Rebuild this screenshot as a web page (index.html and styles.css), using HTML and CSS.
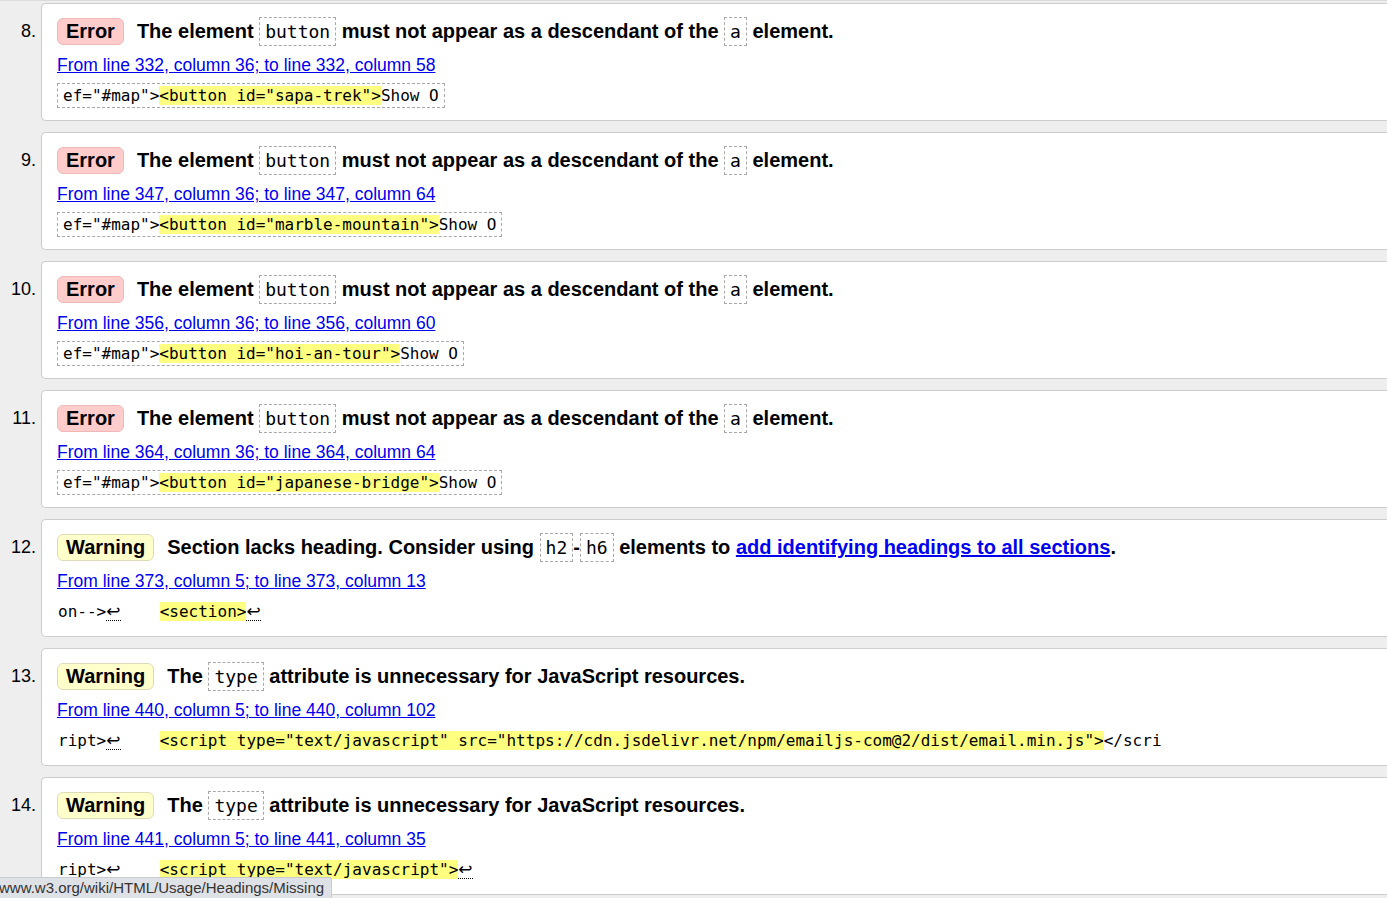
FILE: index.html
```html
<!DOCTYPE html>
<html lang="en">
<head>
<meta charset="utf-8">
<title>Validator messages</title>
<link rel="stylesheet" href="styles.css">
</head>
<body>
<ol class="messages">
  <li class="msg">
    <span class="num">8.</span>
    <div class="card">
      <p class="msg-line"><strong class="badge badge-error">Error</strong><span class="text">The element <code class="ic">button</code> must not appear as a descendant of the <code class="ic">a</code> element.</span></p>
      <p class="loc"><a href="#">From line 332, column 36; to line 332, column 58</a></p>
      <p class="extract-row"><code class="extract boxed">ef="#map"&gt;<mark>&lt;button id="sapa-trek"&gt;</mark>Show O</code></p>
    </div>
  </li>
  <li class="msg">
    <span class="num">9.</span>
    <div class="card">
      <p class="msg-line"><strong class="badge badge-error">Error</strong><span class="text">The element <code class="ic">button</code> must not appear as a descendant of the <code class="ic">a</code> element.</span></p>
      <p class="loc"><a href="#">From line 347, column 36; to line 347, column 64</a></p>
      <p class="extract-row"><code class="extract boxed">ef="#map"&gt;<mark>&lt;button id="marble-mountain"&gt;</mark>Show O</code></p>
    </div>
  </li>
  <li class="msg">
    <span class="num">10.</span>
    <div class="card">
      <p class="msg-line"><strong class="badge badge-error">Error</strong><span class="text">The element <code class="ic">button</code> must not appear as a descendant of the <code class="ic">a</code> element.</span></p>
      <p class="loc"><a href="#">From line 356, column 36; to line 356, column 60</a></p>
      <p class="extract-row"><code class="extract boxed">ef="#map"&gt;<mark>&lt;button id="hoi-an-tour"&gt;</mark>Show O</code></p>
    </div>
  </li>
  <li class="msg">
    <span class="num">11.</span>
    <div class="card">
      <p class="msg-line"><strong class="badge badge-error">Error</strong><span class="text">The element <code class="ic">button</code> must not appear as a descendant of the <code class="ic">a</code> element.</span></p>
      <p class="loc"><a href="#">From line 364, column 36; to line 364, column 64</a></p>
      <p class="extract-row"><code class="extract boxed">ef="#map"&gt;<mark>&lt;button id="japanese-bridge"&gt;</mark>Show O</code></p>
    </div>
  </li>
  <li class="msg">
    <span class="num">12.</span>
    <div class="card">
      <p class="msg-line"><strong class="badge badge-warning">Warning</strong><span class="text">Section lacks heading. Consider using <code class="ic">h2</code>-<code class="ic">h6</code> elements to <a class="strong-link" href="#">add identifying headings to all sections</a>.</span></p>
      <p class="loc"><a href="#">From line 373, column 5; to line 373, column 13</a></p>
      <p class="extract-row"><code class="extract">on--&gt;<b class="lf">↩</b>    <mark>&lt;section&gt;</mark><b class="lf">↩</b></code></p>
    </div>
  </li>
  <li class="msg">
    <span class="num">13.</span>
    <div class="card">
      <p class="msg-line"><strong class="badge badge-warning">Warning</strong><span class="text">The <code class="ic">type</code> attribute is unnecessary for JavaScript resources.</span></p>
      <p class="loc"><a href="#">From line 440, column 5; to line 440, column 102</a></p>
      <p class="extract-row"><code class="extract">ript&gt;<b class="lf">↩</b>    <mark>&lt;script type="text/javascript" src="https://cdn.jsdelivr.net/npm/emailjs-com@2/dist/email.min.js"&gt;</mark>&lt;/scri</code></p>
    </div>
  </li>
  <li class="msg">
    <span class="num">14.</span>
    <div class="card">
      <p class="msg-line"><strong class="badge badge-warning">Warning</strong><span class="text">The <code class="ic">type</code> attribute is unnecessary for JavaScript resources.</span></p>
      <p class="loc"><a href="#">From line 441, column 5; to line 441, column 35</a></p>
      <p class="extract-row"><code class="extract">ript&gt;<b class="lf">↩</b>    <mark>&lt;script type="text/javascript"&gt;</mark><b class="lf">↩</b></code></p>
    </div>
  </li>
</ol>
<div class="status-bar">www.w3.org/wiki/HTML/Usage/Headings/Missing</div>
</body>
</html>
```

FILE: styles.css
```css
html, body {
  margin: 0;
  padding: 0;
  background: #eeeeee;
  overflow: hidden;
}

body {
  border-top: 1px solid #dcdcdc;
  font-family: "Liberation Sans", Arial, sans-serif;
  color: #000;
}

.messages {
  list-style: none;
  margin: 0;
  padding: 2px 0 0 0;
  display: flex;
  flex-direction: column;
  gap: 11px;
}

.msg {
  display: grid;
  grid-template-columns: 41px 1fr;
}

.num {
  font-size: 18px;
  line-height: 32px;
  padding: 12px 5px 0 0;
  text-align: right;
}

.card {
  background: #fff;
  border: 1px solid #cccccc;
  border-right: none;
  border-radius: 5px 0 0 5px;
  height: 118px;
  padding: 11px 0 0 15px;
  box-sizing: border-box;
  display: flex;
  flex-direction: column;
}

.card p {
  margin: 0;
}

.msg-line {
  height: 32px;
  flex: none;
  display: flex;
  align-items: center;
  white-space: nowrap;
}

.badge {
  display: inline-block;
  font-size: 20px;
  font-weight: bold;
  line-height: 25px;
  padding: 0 8px;
  border-radius: 6px;
  border: 1px solid;
  margin-right: 13px;
}

.badge-error {
  background: #ffcccc;
  border-color: #efb8b8;
}

.badge-warning {
  background: #ffffcc;
  border-color: #dedbb8;
}

.text {
  font-size: 20px;
  font-weight: bold;
  line-height: 32px;
}

.ic {
  display: inline-block;
  font-family: "DejaVu Sans Mono", "Liberation Mono", monospace;
  font-weight: normal;
  font-size: 18px;
  line-height: 27px;
  padding: 0 5px;
  border: 1px dashed #a8a8a8;
  vertical-align: middle;
  position: relative;
  top: -1px;
}

.strong-link {
  color: #0000ee;
  text-decoration: underline;
}

.loc {
  margin-top: 7px !important;
  height: 22px;
  flex: none;
  line-height: 22px;
  font-size: 17.5px;
}

.loc a {
  color: #0000ee;
  text-decoration: underline;
}

.extract-row {
  margin-top: 7px !important;
  height: 25px;
  flex: none;
  display: flex;
  align-items: center;
}

.extract {
  display: inline-block;
  font-family: "DejaVu Sans Mono", "Liberation Mono", monospace;
  font-size: 16px;
  line-height: 23px;
  white-space: pre;
  border: 1px solid transparent;
  padding: 0;
}

.extract.boxed {
  border: 1px dashed #a8a8a8;
  padding: 0 5px;
}

mark {
  background: #ffff80;
  color: #000;
}

.lf {
  display: inline-block;
  width: 15px;
  font-family: "DejaVu Sans", sans-serif;
  font-size: 17px;
  font-weight: normal;
  line-height: 18px;
  border-bottom: 1px dotted #000;
  text-align: left;
}

.status-bar {
  position: fixed;
  left: 0;
  bottom: 0;
  width: 331px;
  height: 20px;
  line-height: 20px;
  background: #dee1e6;
  border: 1px solid #c8cbd0;
  border-left: none;
  border-bottom: none;
  border-top-right-radius: 3px;
  color: #333;
  font-family: "Liberation Sans", Arial, sans-serif;
  font-size: 15px;
  text-indent: -1px;
  white-space: nowrap;
  overflow: hidden;
}
```
